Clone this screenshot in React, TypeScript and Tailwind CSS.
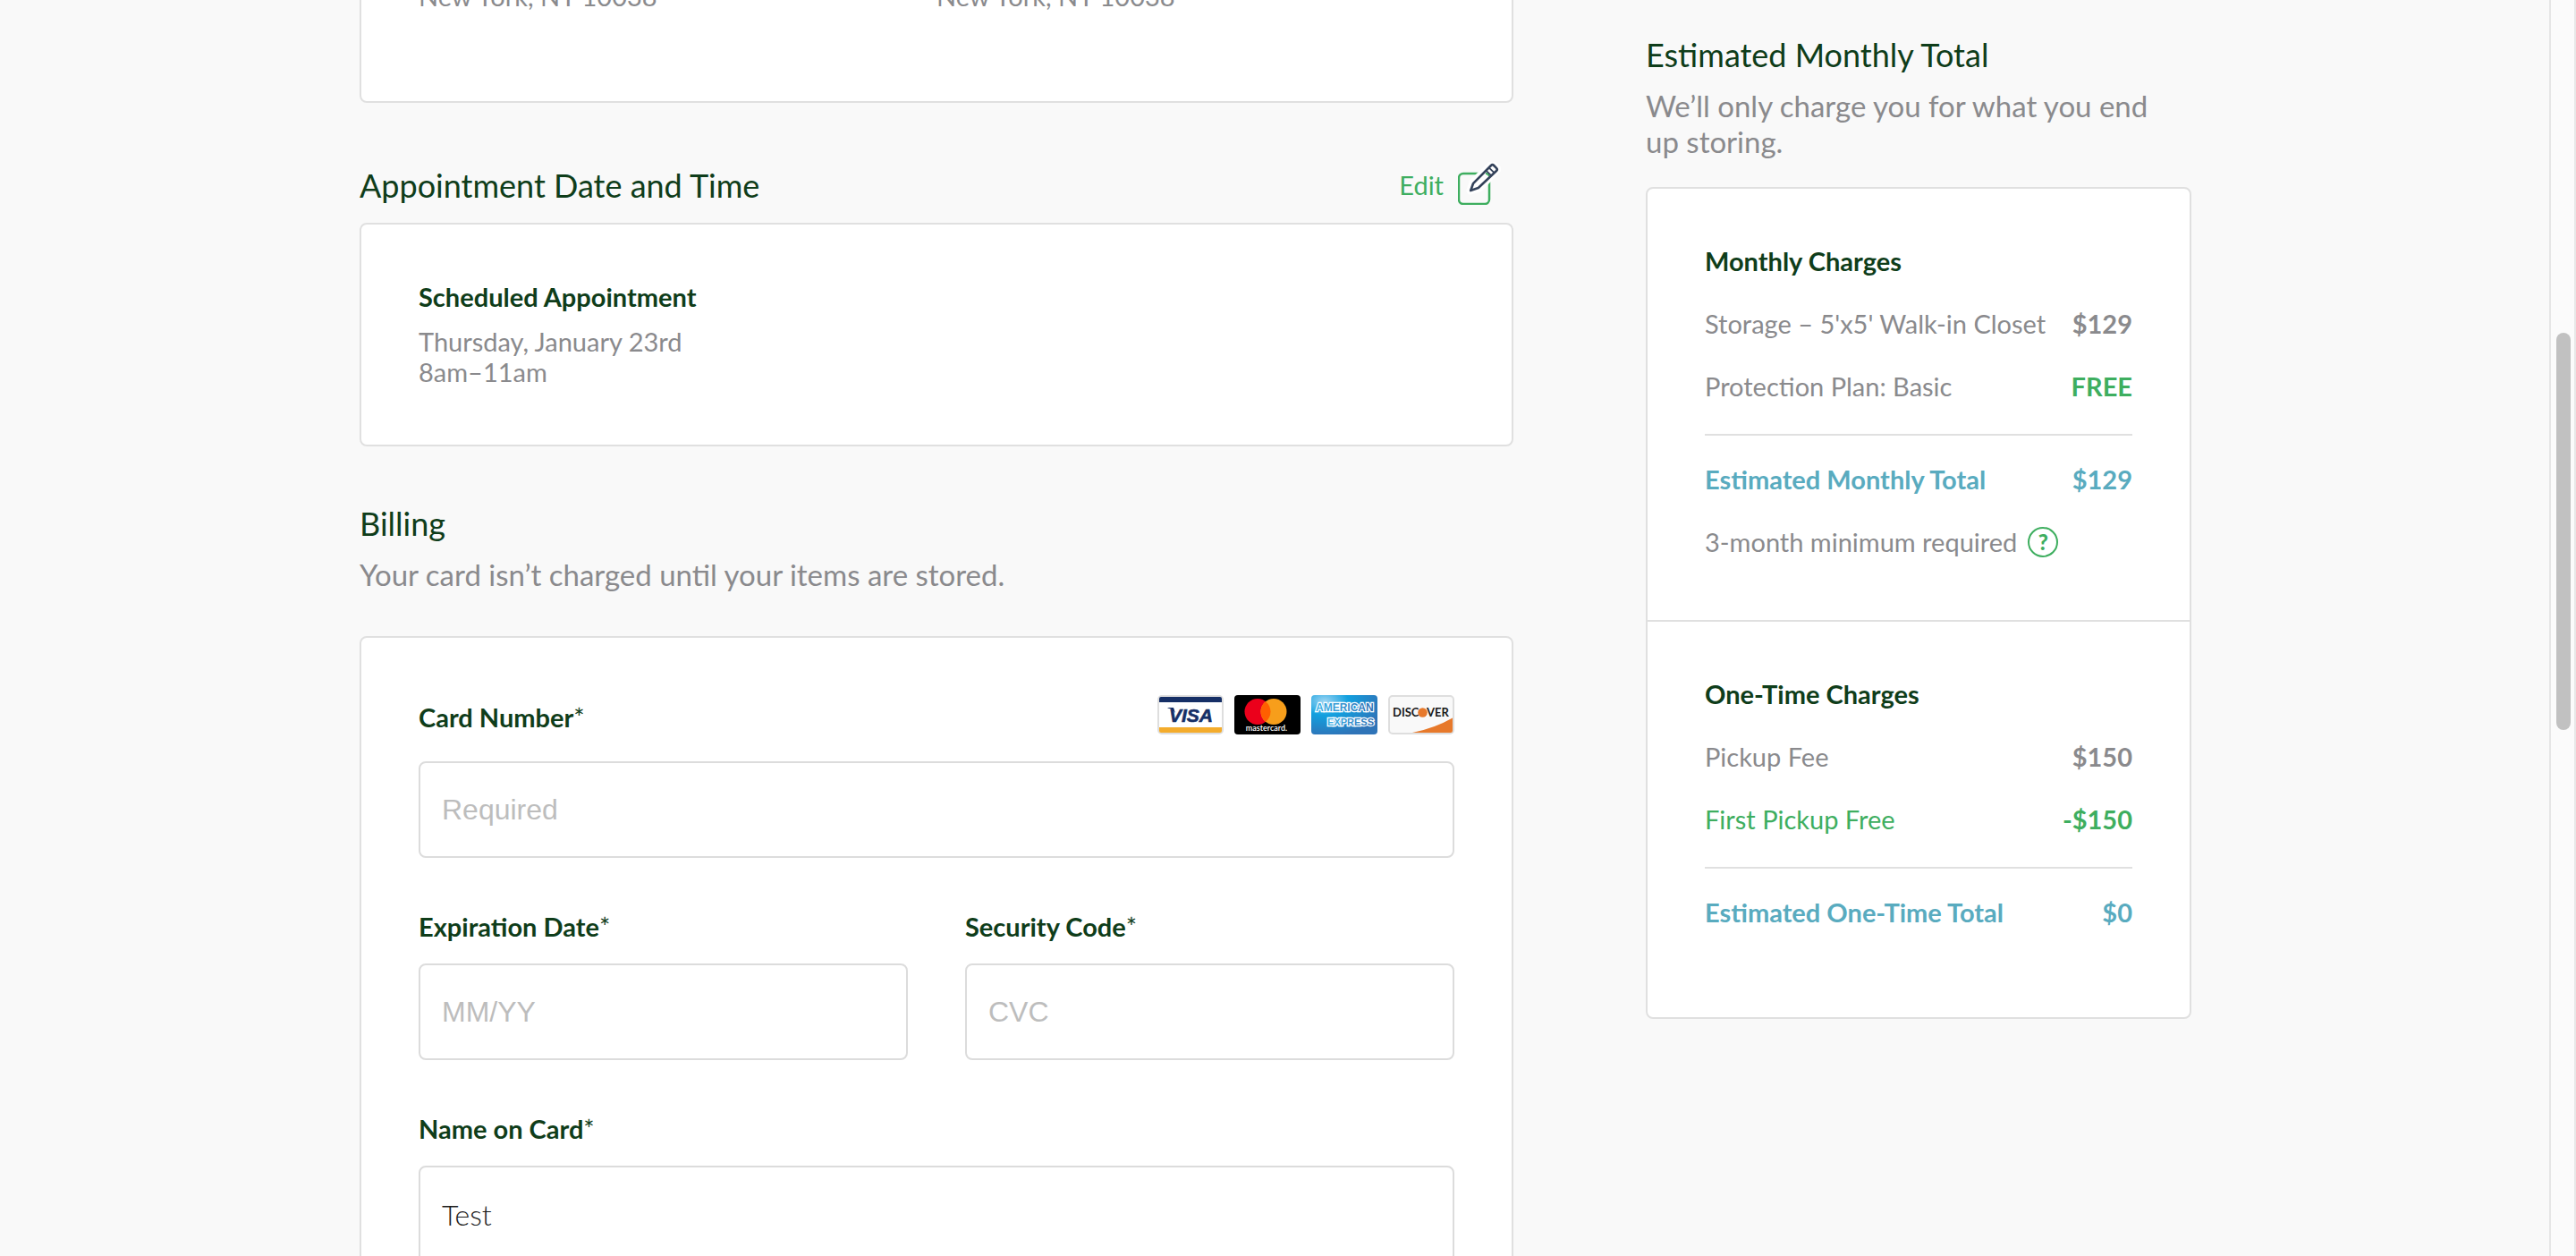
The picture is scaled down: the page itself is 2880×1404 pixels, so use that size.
import React from "react";

const body = "text-[29px] leading-[34px]";
const strong = "text-[29px] leading-[34px] font-bold text-[#0f3d1a]";
const heading = "text-[36px] leading-[40px] text-[#0f3d1a]";
const lead = "mt-[17px] text-[33px] leading-[40px] text-[#8a8a8d]";
const card = "rounded-lg border-2 border-[#e0e0e0] bg-white";

function EditIcon() {
  return (
    <svg width="48" height="48" viewBox="0 0 48 48" fill="none" aria-hidden="true">
      <rect x="1" y="13" width="34" height="34" rx="5" stroke="#3eae5f" strokeWidth="2.500" />
      <path d="M14 32 L17 23 L38 3 L44 8 L24 29 Z" fill="#fbfbfb" stroke="#fefefe" strokeWidth="9" strokeLinejoin="round" />
      <path d="M31 13 Q34 13 35 16" stroke="#3eae5f" strokeWidth="2" />
      <path
        d="M14.2 32 L17 24.2 L37 4 Q38.6 2.4 40.2 4 L43 6.800 Q44.600 8.400 43 10 L22.800 29 Z"
        stroke="#34425a"
        strokeWidth="2.600"
        strokeLinejoin="round"
      />
      <path d="M31.400 9.600 L37.400 15.400 M34.600 6.400 L40.600 12.200" stroke="#34425a" strokeWidth="1.800" />
    </svg>
  );
}

function Visa() {
  return (
    <svg width="74" height="44" viewBox="0 0 74 44" role="img" aria-label="Visa">
      <rect x="1" y="1" width="72" height="42" rx="4" fill="#fff" stroke="#dedede" strokeWidth="2" />
      <path d="M2 8 V4 Q2 2 4 2 H70 Q72 2 72 4 V8 Z" fill="#162f66" />
      <path d="M2 36 H72 V40 Q72 42 70 42 H4 Q2 42 2 40 Z" fill="#f4ac2c" />
      <path d="M11.500 14 H18 L20 20 Q17 15.500 11.500 14.600 Z" fill="#162f66" />
      <text x="13" y="30" fill="#162f66" stroke="#162f66" strokeWidth="0.600" className="font-['Liberation_Sans'] text-[21px] font-bold italic">
        VISA
      </text>
    </svg>
  );
}

function Mastercard() {
  return (
    <svg width="74" height="44" viewBox="0 0 74 44" role="img" aria-label="Mastercard">
      <rect width="74" height="44" rx="4" fill="#000" />
      <circle cx="26" cy="18.500" r="14.500" fill="#eb001b" />
      <circle cx="44" cy="18.500" r="14.500" fill="#f79e1b" />
      <path d="M35 7.130 A14.500 14.500 0 0 1 35 29.870 A14.500 14.500 0 0 1 35 7.130 Z" fill="#ff5f00" />
      <text x="36" y="40" fill="#fff" textAnchor="middle" className="font-[Lato] text-[9px] font-semibold">
        mastercard.
      </text>
    </svg>
  );
}

function Amex() {
  return (
    <svg width="74" height="44" viewBox="0 0 74 44" role="img" aria-label="American Express">
      <defs>
        <radialGradient id="amex" cx="0.2" cy="0.15" r="0.9">
          <stop offset="0" stopColor="#9ad4f3" />
          <stop offset="0.4" stopColor="#12a0df" />
          <stop offset="1" stopColor="#2f74b8" />
        </radialGradient>
        <linearGradient id="amexText" x1="0" x2="1">
          <stop offset="0" stopColor="#3db3e8" />
          <stop offset="1" stopColor="#2f6fb4" />
        </linearGradient>
      </defs>
      <rect width="74" height="44" rx="4" fill="url(#amex)" />
      <g fill="url(#amexText)" stroke="#fff" strokeWidth="2.400" paintOrder="stroke" className="font-['Liberation_Sans'] font-bold">
        <text x="5" y="18" className="text-[12px]">AMERICAN</text>
        <text x="18" y="34" className="text-[11px]">EXPRESS</text>
      </g>
    </svg>
  );
}

function Discover() {
  return (
    <svg width="74" height="44" viewBox="0 0 74 44" role="img" aria-label="Discover">
      <rect x="1" y="1" width="72" height="42" rx="4" fill="#f9f9f9" stroke="#dedede" strokeWidth="2" />
      <path d="M27 42 Q52 37 72 25.500 V40 Q72 42 70 42 Z" fill="#e7792b" />
      <g fill="#1a1a1a" className="font-[Lato] text-[13px] font-bold">
        <text x="5" y="24">DISC</text>
        <text x="43" y="24">VER</text>
      </g>
      <circle cx="38.500" cy="19.500" r="5.300" fill="#e7792b" />
    </svg>
  );
}

function Field({
  id,
  label,
  placeholder,
  value,
  children,
}: {
  id: string;
  label: string;
  placeholder?: string;
  value?: string;
  children?: React.ReactNode;
}) {
  const face = value ? "font-[Lato,sans-serif] font-light" : "font-['Liberation_Sans',sans-serif]";
  return (
    <div>
      <div className="flex items-center justify-between">
        <label htmlFor={id} className={strong}>
          {label}
          <span className="font-normal">*</span>
        </label>
        {children}
      </div>
      <input
        id={id}
        type="text"
        placeholder={placeholder}
        defaultValue={value}
        className={`mt-6 block h-[108px] w-full rounded-lg border-2 border-[#dcdcdc] bg-white px-6 text-[32px] text-[#1c1c1c] outline-none placeholder:text-[#bdbdbd] focus:border-[#3eae5f] ${face}`}
      />
    </div>
  );
}

function Line({ label, amount, labelClass, amountClass }: { label: string; amount: string; labelClass: string; amountClass: string }) {
  return (
    <div className={`flex justify-between ${body}`}>
      <dt className={labelClass}>{label}</dt>
      <dd className={`font-bold ${amountClass}`}>{amount}</dd>
    </div>
  );
}

export default function App() {
  const gray = "text-[#8a8a8d]";
  const green = "text-[#3eae5f]";
  const blue = "text-[#59abbf]";
  const blueStrong = "text-[#59abbf] font-bold";
  return (
    <div className="flex h-screen overflow-hidden bg-[#f9f9f9] font-[Lato,sans-serif]">
      <div className="min-w-0 flex-1">
        <div className="mx-auto flex max-w-[2048px] items-start gap-[148px]">
          <main className="-mt-[87px] flex min-w-0 flex-1 flex-col gap-[66px]">
            <section className={`${card} px-16 pt-16 pb-[100px]`}>
              <div className={`grid grid-cols-2 ${body} ${gray}`}>
                <p>New York, NY 10038</p>
                <p>New York, NY 10038</p>
              </div>
            </section>

            <section>
              <div className="flex h-[52px] items-center justify-between pr-3.5">
                <h2 className={heading}>Appointment Date and Time</h2>
                <button type="button" className={`flex h-full cursor-pointer gap-4 ${body} ${green}`}>
                  <span className="self-center">Edit</span>
                  <EditIcon />
                </button>
              </div>
              <div className={`mt-4 p-16 ${card}`}>
                <h3 className={strong}>Scheduled Appointment</h3>
                <p className={`mt-4 ${body} ${gray}`}>
                  Thursday, January 23rd
                  <br />
                  8am–11am
                </p>
              </div>
            </section>

            <section>
              <h2 className={heading}>Billing</h2>
              <p className={lead}>Your card isn’t charged until your items are stored.</p>
              <form className={`mt-[49px] flex flex-col gap-[60px] p-16 ${card}`}>
                <Field id="card-number" label="Card Number" placeholder="Required">
                  <div className="flex gap-3 pb-1.5">
                    <Visa />
                    <Mastercard />
                    <Amex />
                    <Discover />
                  </div>
                </Field>
                <div className="grid grid-cols-2 gap-16">
                  <Field id="expiration" label="Expiration Date" placeholder="MM/YY" />
                  <Field id="cvc" label="Security Code" placeholder="CVC" />
                </div>
                <Field id="name" label="Name on Card" value="Test" />
              </form>
            </section>
          </main>

          <aside className="w-[610px] shrink-0 pt-[41px]">
            <h2 className={heading}>Estimated Monthly Total</h2>
            <p className={`${lead} pr-5`}>We’ll only charge you for what you end up storing.</p>
            <div className={`mt-[31px] ${card}`}>
              <section className="border-b-2 border-[#e0e0e0] px-16 pt-16 pb-[70px]">
                <h3 className={strong}>Monthly Charges</h3>
                <dl className="mt-9 flex flex-col gap-9">
                  <Line label="Storage – 5'x5' Walk-in Closet" amount="$129" labelClass={gray} amountClass={gray} />
                  <Line label="Protection Plan: Basic" amount="FREE" labelClass={gray} amountClass={green} />
                </dl>
                <hr className="mt-9 mb-8 border-t-2 border-[#e0e0e0]" />
                <dl>
                  <Line label="Estimated Monthly Total" amount="$129" labelClass={blueStrong} amountClass={blue} />
                </dl>
                <p className={`mt-9 flex items-center gap-3 ${body} ${gray}`}>
                  3-month minimum required
                  <button
                    type="button"
                    aria-label="About the minimum"
                    className="flex size-[34px] cursor-pointer items-center justify-center rounded-full border-2 border-[#3eae5f] text-[24px] leading-none font-black text-[#3eae5f]"
                  >
                    ?
                  </button>
                </p>
              </section>
              <section className="px-16 pt-16 pb-[100px]">
                <h3 className={strong}>One-Time Charges</h3>
                <dl className="mt-9 flex flex-col gap-9">
                  <Line label="Pickup Fee" amount="$150" labelClass={gray} amountClass={gray} />
                  <Line label="First Pickup Free" amount="-$150" labelClass={green} amountClass={green} />
                </dl>
                <hr className="mt-9 mb-8 border-t-2 border-[#e0e0e0]" />
                <dl>
                  <Line label="Estimated One-Time Total" amount="$0" labelClass={blueStrong} amountClass={blue} />
                </dl>
              </section>
            </div>
          </aside>
        </div>
      </div>

      <div className="w-7 shrink-0 border-r-2 border-[#e8e8e8] bg-[#fbfbfb] pt-[372px] pl-1.5 shadow-[-2px_0_0_#e6e6e6]">
        <div className="h-[444px] w-4 rounded-full bg-[#c1c1c1]" />
      </div>
    </div>
  );
}
